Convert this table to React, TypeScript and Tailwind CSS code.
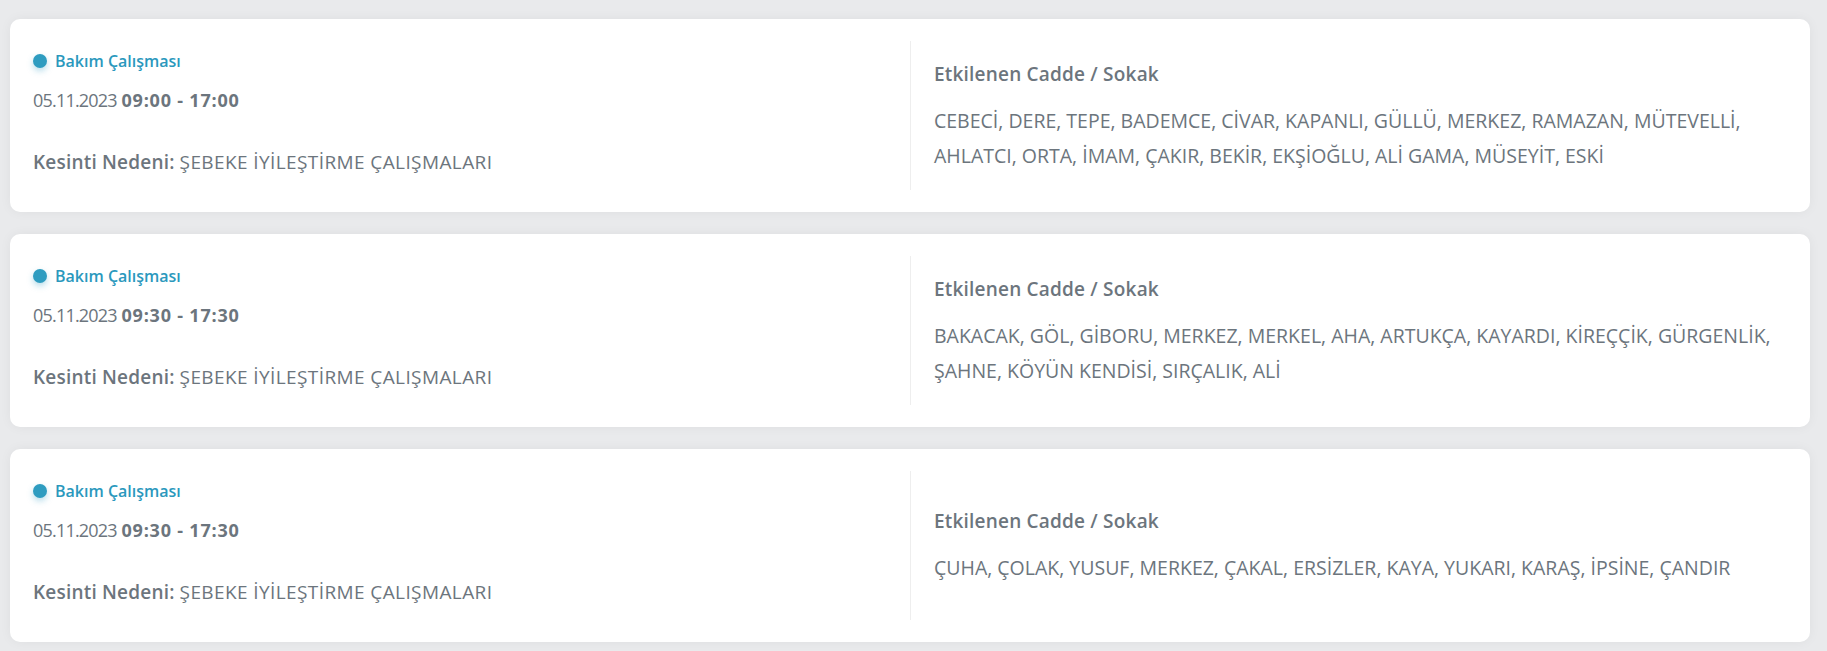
import React from "react";

type Outage = {
  date: string;
  time: string;
  reason: string;
  streets: string;
};

const outages: Outage[] = [
  {
    date: "05.11.2023",
    time: "09:00 - 17:00",
    reason: "ŞEBEKE İYİLEŞTİRME ÇALIŞMALARI",
    streets:
      "CEBECİ, DERE, TEPE, BADEMCE, CİVAR, KAPANLI, GÜLLÜ, MERKEZ, RAMAZAN, MÜTEVELLİ, AHLATCI, ORTA, İMAM, ÇAKIR, BEKİR, EKŞİOĞLU, ALİ GAMA, MÜSEYİT, ESKİ",
  },
  {
    date: "05.11.2023",
    time: "09:30 - 17:30",
    reason: "ŞEBEKE İYİLEŞTİRME ÇALIŞMALARI",
    streets:
      "BAKACAK, GÖL, GİBORU, MERKEZ, MERKEL, AHA, ARTUKÇA, KAYARDI, KİREÇÇİK, GÜRGENLİK, ŞAHNE, KÖYÜN KENDİSİ, SIRÇALIK, ALİ",
  },
  {
    date: "05.11.2023",
    time: "09:30 - 17:30",
    reason: "ŞEBEKE İYİLEŞTİRME ÇALIŞMALARI",
    streets: "ÇUHA, ÇOLAK, YUSUF, MERKEZ, ÇAKAL, ERSİZLER, KAYA, YUKARI, KARAŞ, İPSİNE, ÇANDIR",
  },
];

function OutageCard({ item }: { item: Outage }) {
  return (
    <div className="flex h-[193px] py-[22px] bg-white rounded-[10px] shadow-[0_0_12px_rgba(0,0,0,0.05)]">
      {/* Left: type, date, reason */}
      <div className="w-[900px] pl-[23px] pt-[10px] shrink-0">
        <div className="flex items-center gap-[8px] h-[20px]">
          <span className="w-[14px] h-[14px] rounded-full bg-[#2e9cc0] shadow-[0_3px_6px_rgba(46,156,192,0.35)]" />
          <span className="text-[16px] font-semibold text-[#2a98bd]">Bakım Çalışması</span>
        </div>
        <div className="mt-[17px] h-[24px] leading-[24px] text-[18px] text-[#6c757d] whitespace-nowrap">
          <span className="tracking-[-0.8px]">{item.date}</span>{" "}
          <span className="font-bold tracking-[0.8px]">{item.time}</span>
        </div>
        <div className="mt-[38px] h-[24px] leading-[24px] text-[19px] text-[#6c757d] whitespace-nowrap">
          <span className="font-semibold tracking-[0.2px]">Kesinti Nedeni:</span>{" "}
          <span className="tracking-[0.4px]">{item.reason}</span>
        </div>
      </div>

      {/* Right: affected streets */}
      <div className="flex-1 flex flex-col justify-center border-l border-[#eeeeee] pl-[23px] pr-[10px] pt-[3px]">
        <div className="leading-[24px] text-[19px] font-semibold tracking-[0.2px] text-[#6c757d]">
          Etkilenen Cadde / Sokak
        </div>
        <div className="mt-[17px] leading-[35px] text-[19.5px] text-[#6c757d]">{item.streets}</div>
      </div>
    </div>
  );
}

export default function App() {
  return (
    <div
      className="min-h-screen bg-[#e9eaec] pl-[10px] pr-[17px] pt-[19px] pb-[8px] flex flex-col gap-[22px]"
      style={{ fontFamily: '"Open Sans", "Noto Sans", sans-serif' }}
    >
      {outages.map((item, i) => (
        <OutageCard key={i} item={item} />
      ))}
    </div>
  );
}
